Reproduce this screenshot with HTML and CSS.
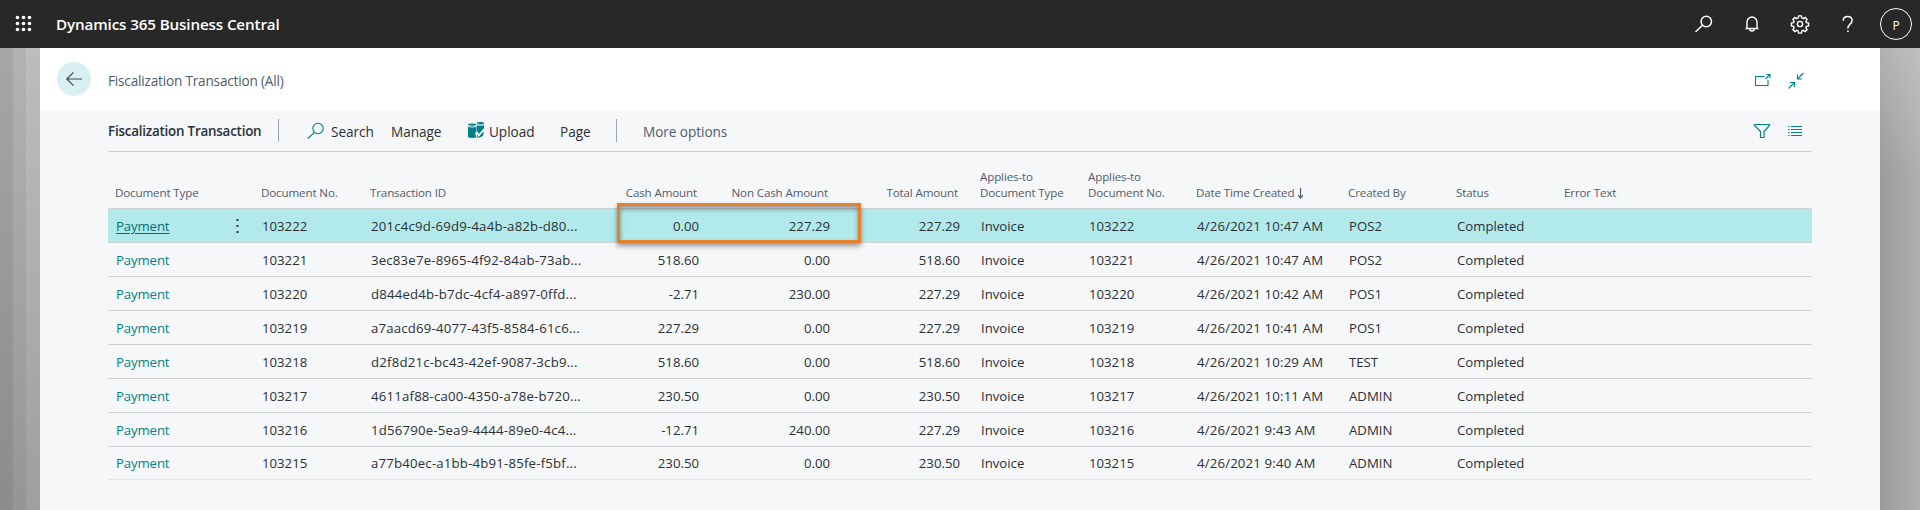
FILE: index.html
```html
<!DOCTYPE html>
<html lang="en">
<head>
<meta charset="utf-8">
<title>Dynamics 365 Business Central</title>
<link rel="stylesheet" href="styles.css">
</head>
<body>
<header class="topbar">
  <svg class="waffle" width="18" height="18" viewBox="0 0 18 18" fill="#fff"><circle cx="2.5" cy="2.5" r="1.8"/><circle cx="8.5" cy="2.5" r="1.8"/><circle cx="14.5" cy="2.5" r="1.8"/><circle cx="2.5" cy="8.5" r="1.8"/><circle cx="8.5" cy="8.5" r="1.8"/><circle cx="14.5" cy="8.5" r="1.8"/><circle cx="2.5" cy="14.5" r="1.8"/><circle cx="8.5" cy="14.5" r="1.8"/><circle cx="14.5" cy="14.5" r="1.8"/></svg>
  <span class="brand">Dynamics 365 Business Central</span>
  <nav class="tools">
    <svg width="48" height="48" viewBox="0 0 48 48" fill="none" stroke="#fff" stroke-width="1.5"><circle cx="26.300" cy="21.500" r="5.200"/><path d="M22.500 25.200L15.500 32"/></svg>
    <svg width="48" height="48" viewBox="0 0 48 48" fill="none" stroke="#fff" stroke-width="1.400"><path d="M17.500 28.500H30.500M19 28.500V22a5 5 0 0 1 10 0V28.500M21.800 29a2.200 2 0 0 0 4.400 0"/></svg>
    <svg width="48" height="48" viewBox="0 0 48 48" fill="none" stroke="#fff" stroke-width="1.400"><circle cx="24" cy="24" r="2.600"/><path d="M22.600 16.200h2.800l.5 2.200 1.300.5 1.900-1.200 2 2-1.200 1.900.5 1.300 2.200.5v2.800l-2.200.5-.5 1.300 1.200 1.900-2 2-1.900-1.200-1.300.5-.5 2.200h-2.800l-.5-2.200-1.300-.5-1.900 1.200-2-2 1.200-1.900-.5-1.300-2.200-.5v-2.800l2.200-.5.5-1.300-1.200-1.900 2-2 1.900 1.200 1.300-.5z" transform="translate(0 -.3)"/></svg>
    <svg width="48" height="48" viewBox="0 0 48 48" fill="none" stroke="#fff" stroke-width="1.500"><path d="M19.200 20.800c0-2.800 1.900-4.400 4.500-4.400s4.400 1.600 4.400 4c0 3.600-4.300 3.900-4.300 8"/><path d="M23.100 31.200h1.600"/></svg>
    <span class="avatar">P</span>
  </nav>
</header>
<div class="shell">
  <div class="edge edge-left"></div>
  <main class="page">
    <div class="titlebar">
      <span class="back"><svg width="34" height="34" viewBox="0 0 34 34" fill="none" stroke="#3c4548" stroke-width="1.200"><path d="M25 17H10M16.500 10.300L9.800 17l6.700 6.700"/></svg></span>
      <span class="caption">Fiscalization Transaction (All)</span>
      <span class="page-icons">
        <svg width="18" height="18" viewBox="0 0 18 18" fill="none" stroke="#008489" stroke-width="1.100"><path d="M10.500 4.500H1.500v9h12.500V8M11.500 7L16 2.500M12.500 2.500h3.500V6"/></svg>
        <svg width="18" height="18" viewBox="0 0 18 18" fill="none" stroke="#008489" stroke-width="1.100"><path d="M1.500 16.500L7.500 10.500M3 10.500h4.500V15M16.500 1L10.500 7M10.500 2.500V7H15"/></svg>
      </span>
    </div>
    <div class="commands">
      <strong class="list-name">Fiscalization Transaction</strong>
      <i class="divider"></i>
      <svg class="find" width="18" height="18" viewBox="0 0 18 18" fill="none" stroke="#008489" stroke-width="1.100"><circle cx="11" cy="6.500" r="5.200"/><path d="M7.300 10.300L1 16.500"/></svg>
      <span class="cmd search">Search</span>
      <span class="cmd manage">Manage</span>
      <svg class="upload-icon" width="17" height="17" viewBox="0 0 17 17"><path fill="#008089" d="M0 4v11c2 1.200 6 1.200 8.500.5L7 11l1.500-.5V4zM9 2.500V9l2 3 5-5.500v-4z"/><ellipse cx="4.200" cy="2.600" rx="4.200" ry="1.100" fill="#008089"/><ellipse cx="12.500" cy="1.100" rx="3.600" ry="1.100" fill="#008089"/><path d="M8.500 11.500l2.400 3.300L15.500 9v3.500c-.6 1.800-2.500 3-6 3.300z" fill="#008089"/><path d="M0 4.300c2 1 6 1 8.300 0M9 2.700c2 .9 5 .9 7 0" fill="none" stroke="#f6f7f9" stroke-width=".9"/><path d="M8 10.200l2.800 3.500L16 7" fill="none" stroke="#f6f7f9" stroke-width="1.200"/></svg>
      <span class="cmd upload">Upload</span>
      <span class="cmd pagecmd">Page</span>
      <i class="divider"></i>
      <span class="cmd more">More options</span>
      <span class="list-icons">
        <svg width="18" height="16" viewBox="0 0 18 16" fill="none" stroke="#008489" stroke-width="1.200"><path d="M1.500 1.500h15v1L11 8.500v6H7.500v-6L1.500 2.500z"/></svg>
        <svg width="16" height="16" viewBox="0 0 16 16" stroke="#008489" stroke-width="1.200"><path d="M1 3.500h1.500M4 3.500h11M1 6.500h1.500M4 6.500h11M1 9.500h1.500M4 9.500h11M1 12.500h1.500M4 12.500h11"/></svg>
      </span>
    </div>
    <section class="grid">
      <div class="row head"><span>Document Type</span><span>Document No.</span><span>Transaction ID</span><span class="num">Cash Amount</span><span class="num">Non Cash Amount</span><span class="num">Total Amount</span><span class="after">Applies-to<br>Document Type</span><span>Applies-to<br>Document No.</span><span>Date Time Created <svg width="7" height="11" viewBox="0 0 7 11" fill="none" stroke="#505c6d" stroke-width="1.200"><path d="M3.500 0V10M1 7.200L3.500 10 6 7.200"/></svg></span><span>Created By</span><span>Status</span><span>Error Text</span></div>
      <div class="row selected"><span class="link">Payment<svg class="dots" width="3" height="14" viewBox="0 0 3 14" fill="#333"><path d="M.5 0h2v2h-2zM.5 6h2v2h-2zM.5 12h2v2h-2z"/></svg></span><span>103222</span><span class="id">201c4c9d-69d9-4a4b-a82b-d80...</span><span class="num">0.00</span><span class="num">227.29</span><span class="num">227.29</span><span class="after">Invoice</span><span>103222</span><span class="date">4/26/2021 10:47 AM</span><span>POS2</span><span>Completed</span><span></span><div class="highlight"></div></div>
      <div class="row"><span class="link">Payment</span><span>103221</span><span class="id">3ec83e7e-8965-4f92-84ab-73ab...</span><span class="num">518.60</span><span class="num">0.00</span><span class="num">518.60</span><span class="after">Invoice</span><span>103221</span><span class="date">4/26/2021 10:47 AM</span><span>POS2</span><span>Completed</span><span></span></div>
      <div class="row"><span class="link">Payment</span><span>103220</span><span class="id">d844ed4b-b7dc-4cf4-a897-0ffd...</span><span class="num">-2.71</span><span class="num">230.00</span><span class="num">227.29</span><span class="after">Invoice</span><span>103220</span><span class="date">4/26/2021 10:42 AM</span><span>POS1</span><span>Completed</span><span></span></div>
      <div class="row"><span class="link">Payment</span><span>103219</span><span class="id">a7aacd69-4077-43f5-8584-61c6...</span><span class="num">227.29</span><span class="num">0.00</span><span class="num">227.29</span><span class="after">Invoice</span><span>103219</span><span class="date">4/26/2021 10:41 AM</span><span>POS1</span><span>Completed</span><span></span></div>
      <div class="row"><span class="link">Payment</span><span>103218</span><span class="id">d2f8d21c-bc43-42ef-9087-3cb9...</span><span class="num">518.60</span><span class="num">0.00</span><span class="num">518.60</span><span class="after">Invoice</span><span>103218</span><span class="date">4/26/2021 10:29 AM</span><span>TEST</span><span>Completed</span><span></span></div>
      <div class="row"><span class="link">Payment</span><span>103217</span><span class="id">4611af88-ca00-4350-a78e-b720...</span><span class="num">230.50</span><span class="num">0.00</span><span class="num">230.50</span><span class="after">Invoice</span><span>103217</span><span class="date">4/26/2021 10:11 AM</span><span>ADMIN</span><span>Completed</span><span></span></div>
      <div class="row"><span class="link">Payment</span><span>103216</span><span class="id">1d56790e-5ea9-4444-89e0-4c4...</span><span class="num">-12.71</span><span class="num">240.00</span><span class="num">227.29</span><span class="after">Invoice</span><span>103216</span><span class="date">4/26/2021 9:43 AM</span><span>ADMIN</span><span>Completed</span><span></span></div>
      <div class="row last"><span class="link">Payment</span><span>103215</span><span class="id">a77b40ec-a1bb-4b91-85fe-f5bf...</span><span class="num">230.50</span><span class="num">0.00</span><span class="num">230.50</span><span class="after">Invoice</span><span>103215</span><span class="date">4/26/2021 9:40 AM</span><span>ADMIN</span><span>Completed</span><span></span></div>
    </section>
  </main>
  <div class="edge edge-right"></div>
</div>
</body>
</html>
```
FILE: styles.css
```css
* { box-sizing: border-box; }
body { margin: 0; height: 510px; overflow: hidden; display: flex; flex-direction: column; font-family: "Segoe UI", "Open Sans", sans-serif; font-size: 13.2px; color: #2b3035; background: #f6f7f9; }
svg { display: block; flex: none; }
.topbar { height: 48px; flex: none; display: flex; align-items: center; background: #282828; color: #fff; padding: 0 8px 0 15px; }
.brand { margin-left: 23px; font-size: 15.2px; font-weight: 600; letter-spacing: -.13px; }
.tools { margin-left: auto; display: flex; align-items: center; }
.avatar { width: 32px; height: 32px; margin-left: 8px; border: 1px solid #fff; border-radius: 50%; display: flex; align-items: center; justify-content: center; font-size: 12px; padding-top: 2px; }
.shell { flex: 1; display: flex; min-height: 0; }
.edge { width: 40px; flex: none; }
.edge-left { background: linear-gradient(rgba(0,0,0,0), rgba(0,0,0,.16)), linear-gradient(90deg, #a6a6a6 0 13px, #b2b2b2 13px 26px, #bdbdbd 26px); }
.edge-right { background: linear-gradient(rgba(255,255,255,.22), rgba(255,255,255,0) 130px), linear-gradient(90deg, #9b9b9b, #afafaf); }
.page { flex: 1; min-width: 0; }
.titlebar { height: 62px; background: #fff; display: flex; align-items: center; padding: 0 75px 0 17px; }
.back { width: 34px; height: 34px; border-radius: 50%; background: #d9f0f2; }
.caption { margin-left: 17px; padding-top: 3px; font-size: 13.6px; letter-spacing: -.19px; color: #505c6d; }
.page-icons { margin-left: auto; display: flex; gap: 15px; padding-top: 4px; }
.commands { height: 42px; margin: 0 68px; border-bottom: 1px solid #cfd2d5; display: flex; align-items: center; white-space: nowrap; }
.list-name { font-weight: 600; width: 170px; font-size: 13.4px; letter-spacing: -.22px; }
.divider { width: 1px; height: 23px; background: #9da3ad; }
.find { margin-left: 28px; }
.cmd { font-size: 13.6px; padding-top: 2px; letter-spacing: -.05px; }
.search { margin-left: 6px; width: 60px; }
.manage { width: 77px; }
.upload { margin-left: 4px; width: 71px; }
.pagecmd { width: 56px; }
.more { margin-left: 26px; color: #505c6d; letter-spacing: -.05px; }
.list-icons { margin-left: auto; display: flex; gap: 16px; padding-right: 9px; }
.grid { margin: 0 68px; }
.row { position: relative; height: 34px; display: grid; grid-template-columns: 146px 109px 234px 95px 131px 130px 128px 108px 152px 108px 108px 1fr; align-items: center; padding-left: 7px; border-bottom: 1px solid #cfd2d5; white-space: nowrap; }
.row > span { padding-left: 1px; }
.row > .num { text-align: right; }
.row > .after { padding-left: 21px; }
.row.head { height: 57px; align-items: end; padding-bottom: 7px; font-size: 11.6px; letter-spacing: -.14px; line-height: 16px; color: #505c6d; }
.head > span { padding-left: 0; }
.head > .num { padding-right: 2px; }
.head > .after { padding-left: 20px; }
.head svg { display: inline-block; vertical-align: -2px; }
.link { color: #008489; display: flex; align-items: center; letter-spacing: -.12px; }
.id { letter-spacing: .2px; }
.date { letter-spacing: .17px; }
.selected { background: #b2eaec; }
.selected .link { color: #006d71; text-decoration: underline; text-underline-offset: 2px; }
.dots { margin-left: auto; margin-right: 22px; }
.last { height: 33px; border-color: #e2e4e6; }
.highlight { position: absolute; left: 509px; top: -6px; width: 244px; height: 40px; border: 3px solid #e8802a; box-shadow: 0 3px 5px rgba(0,0,0,.4), inset 0 3px 5px rgba(0,0,0,.4); }
```
